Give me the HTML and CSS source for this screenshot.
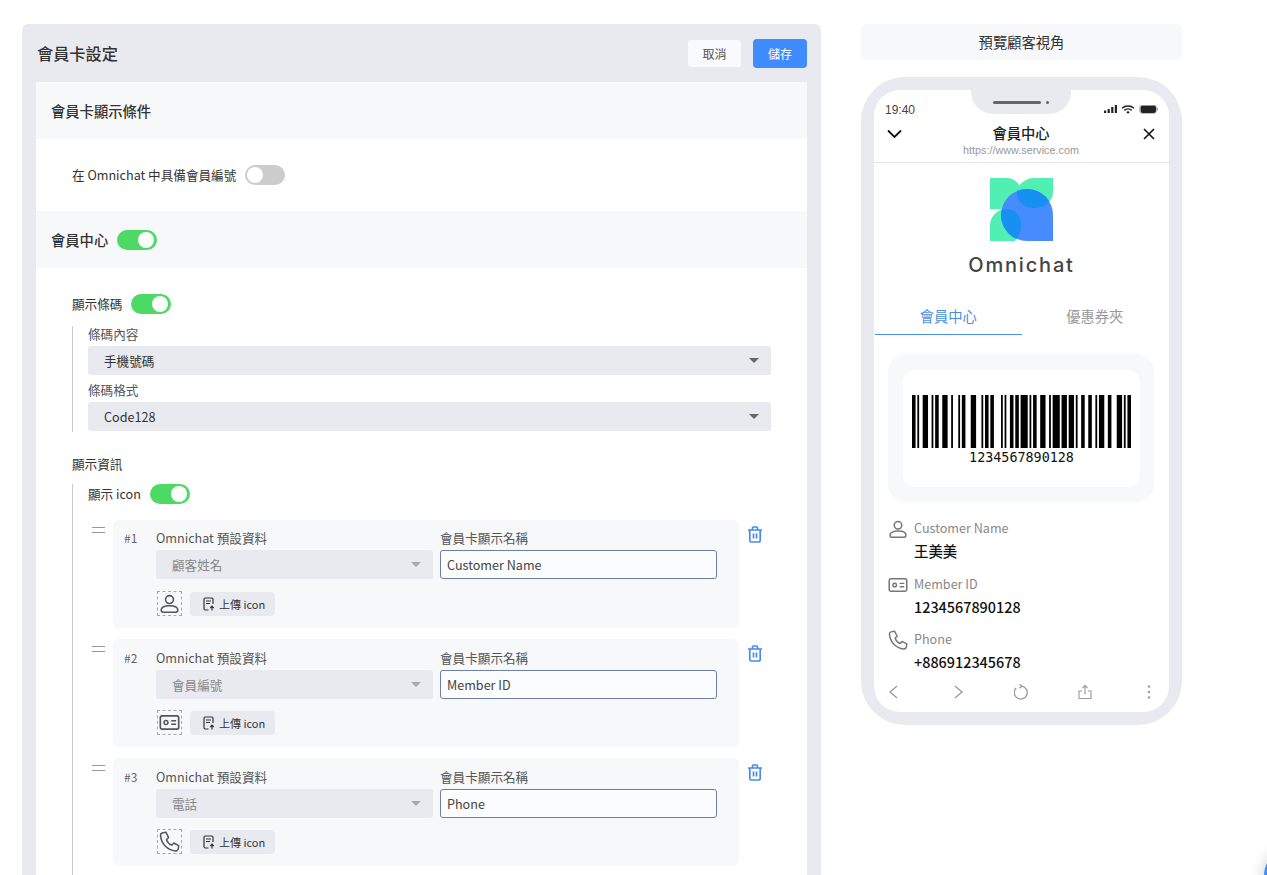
FILE: index.html
```html
<!DOCTYPE html>
<html lang="zh-Hant">
<head>
    <meta charset="UTF-8">
    <meta name="viewport" content="width=device-width, initial-scale=1.0">
    <title>會員卡設定</title>
    <link rel="stylesheet" href="styles.css">
</head>
<body>
    <svg class="icon-defs" width="0" height="0">
        <defs>
            <symbol id="i-person" viewBox="0 0 24 24"><circle cx="12" cy="7.5" r="4.5" fill="none" stroke="currentColor" stroke-width="1.8"/><path d="M5 22h14a2.5 2.5 0 0 0 2.5-2.5c0-3.5-4-5-9.500-5s-9.500 1.500-9.500 5A2.500 2.500 0 0 0 5 22z" fill="none" stroke="currentColor" stroke-width="1.8"/></symbol>
            <symbol id="i-card" viewBox="0 0 24 24"><rect x="1.5" y="4.5" width="21" height="15" rx="2" fill="none" stroke="currentColor" stroke-width="1.9"/><circle cx="8" cy="12" r="2.2" fill="none" stroke="currentColor" stroke-width="1.7"/><path d="M14 10h5.500M14 14h5.500" fill="none" stroke="currentColor" stroke-width="1.7"/></symbol>
            <symbol id="i-phone" viewBox="0 0 24 24"><path d="M4.500 2 8 1.500l3 6-2.500 2.500c1 2.800 3.400 5.200 6 6.200l2.400-2.500 5.600 3-.4 3.300c-.2 1.700-1.700 3-3.500 2.800C9.500 21.500 2.600 14.500 1.800 5.500 1.600 3.700 2.800 2.300 4.500 2z" fill="none" stroke="currentColor" stroke-width="1.7" stroke-linejoin="round"/></symbol>
            <symbol id="i-upload" viewBox="0 0 14 14"><path d="M6.500 13H3.200A1.200 1.200 0 0 1 2 11.800V2.200A1.200 1.200 0 0 1 3.200 1h6.600A1.200 1.200 0 0 1 11 2.200V7" fill="none" stroke="currentColor" stroke-width="1.2"/><path d="M4 4h5M4 6.500h4" fill="none" stroke="currentColor" stroke-width="1"/><path d="M10 13.500V9.500M8.300 11 10 9.200 11.700 11" fill="none" stroke="currentColor" stroke-width="1.2"/></symbol>
            <symbol id="i-trash" viewBox="0 0 16 17"><path d="M1 4h14M5.500 4V2a1 1 0 0 1 1-1h3a1 1 0 0 1 1 1v2" fill="none" stroke="currentColor" stroke-width="1.7"/><path d="M2.800 4v10.500A1.500 1.500 0 0 0 4.300 16h7.400a1.500 1.500 0 0 0 1.500-1.500V4" fill="none" stroke="currentColor" stroke-width="1.7"/><path d="M6.500 7.500v5M9.500 7.500v5" fill="none" stroke="currentColor" stroke-width="1.7"/></symbol>
        </defs>
    </svg>

    <div class="page">
        <div class="panel">
            <div class="panel-head">
                <h1 class="panel-title">會員卡設定</h1>
                <div class="panel-actions">
                    <button class="btn-cancel">取消</button>
                    <button class="btn-save">儲存</button>
                </div>
            </div>

            <div class="section-head">會員卡顯示條件</div>
            <div class="section-body condition-body">
                <div class="switch-row">
                    <span>在 Omnichat 中具備會員編號</span>
                    <span class="switch"></span>
                </div>
            </div>

            <div class="section-head">
                <span>會員中心</span>
                <span class="switch on"></span>
            </div>
            <div class="section-body">
                <div class="switch-row">
                    <span>顯示條碼</span>
                    <span class="switch on"></span>
                </div>
                <div class="branch">
                    <div class="field-label">條碼內容</div>
                    <div class="select">手機號碼<span class="caret"></span></div>
                    <div class="field-label next-field">條碼格式</div>
                    <div class="select">Code128<span class="caret"></span></div>
                </div>

                <div class="group-title">顯示資訊</div>
                <div class="branch info-branch">
                    <div class="switch-row">
                        <span>顯示 icon</span>
                        <span class="switch on"></span>
                    </div>

                    <div class="item-row">
                        <div class="drag"></div>
                        <div class="item-card">
                            <div class="item-num">#1</div>
                            <div class="item-main">
                                <div class="item-fields">
                                    <div class="item-col">
                                        <div class="field-label">Omnichat 預設資料</div>
                                        <div class="select disabled">顧客姓名<span class="caret"></span></div>
                                    </div>
                                    <div class="item-col">
                                        <div class="field-label">會員卡顯示名稱</div>
                                        <input class="name-input" type="text" value="Customer Name">
                                    </div>
                                </div>
                                <div class="icon-row">
                                    <span class="icon-box"><svg width="21" height="21"><use href="#i-person"/></svg></span>
                                    <span class="upload-btn"><svg width="14" height="14"><use href="#i-upload"/></svg>上傳 icon</span>
                                </div>
                            </div>
                        </div>
                        <svg class="trash" width="16" height="17"><use href="#i-trash"/></svg>
                    </div>

                    <div class="item-row">
                        <div class="drag"></div>
                        <div class="item-card">
                            <div class="item-num">#2</div>
                            <div class="item-main">
                                <div class="item-fields">
                                    <div class="item-col">
                                        <div class="field-label">Omnichat 預設資料</div>
                                        <div class="select disabled">會員編號<span class="caret"></span></div>
                                    </div>
                                    <div class="item-col">
                                        <div class="field-label">會員卡顯示名稱</div>
                                        <input class="name-input" type="text" value="Member ID">
                                    </div>
                                </div>
                                <div class="icon-row">
                                    <span class="icon-box"><svg width="21" height="21"><use href="#i-card"/></svg></span>
                                    <span class="upload-btn"><svg width="14" height="14"><use href="#i-upload"/></svg>上傳 icon</span>
                                </div>
                            </div>
                        </div>
                        <svg class="trash" width="16" height="17"><use href="#i-trash"/></svg>
                    </div>

                    <div class="item-row">
                        <div class="drag"></div>
                        <div class="item-card">
                            <div class="item-num">#3</div>
                            <div class="item-main">
                                <div class="item-fields">
                                    <div class="item-col">
                                        <div class="field-label">Omnichat 預設資料</div>
                                        <div class="select disabled">電話<span class="caret"></span></div>
                                    </div>
                                    <div class="item-col">
                                        <div class="field-label">會員卡顯示名稱</div>
                                        <input class="name-input" type="text" value="Phone">
                                    </div>
                                </div>
                                <div class="icon-row">
                                    <span class="icon-box"><svg width="21" height="21"><use href="#i-phone"/></svg></span>
                                    <span class="upload-btn"><svg width="14" height="14"><use href="#i-upload"/></svg>上傳 icon</span>
                                </div>
                            </div>
                        </div>
                        <svg class="trash" width="16" height="17"><use href="#i-trash"/></svg>
                    </div>
                </div>
            </div>
        </div>

        <div class="preview">
            <div class="preview-head">預覽顧客視角</div>
            <div class="phone">
                <div class="screen">
                    <div class="notch"><span class="speaker"></span><span class="camera"></span></div>
                    <div class="status-bar">
                        <span class="time">19:40</span>
                        <svg width="54" height="9" viewBox="0 0 54 9">
                            <rect x="0" y="5.5" width="2.2" height="2.5" fill="#222"/><rect x="3.6" y="4" width="2.2" height="4" fill="#222"/><rect x="7.2" y="2" width="2.2" height="6" fill="#222"/><rect x="10.8" y="0" width="2.2" height="8" fill="#222"/>
                            <path d="M18 3.2a9 9 0 0 1 12 0M20.300 5.400a5.500 5.500 0 0 1 7.400 0" fill="none" stroke="#222" stroke-width="1.5"/><path d="M22.200 7 24 8.800 25.800 7a2.600 2.600 0 0 0-3.600 0z" fill="#222"/>
                            <rect x="36.5" y=".5" width="15.5" height="7.5" rx="2" fill="#222"/><rect x="35.5" y="0" width="17" height="8.5" rx="2.5" fill="none" stroke="#999" stroke-width=".6"/><rect x="53" y="3" width="1" height="2.5" fill="#999"/>
                        </svg>
                    </div>
                    <div class="nav-bar">
                        <svg width="15" height="22" viewBox="0 0 15 9"><path d="M1 1l6.500 6.500L14 1" fill="none" stroke="#111" stroke-width="1.8"/></svg>
                        <div class="nav-title">
                            <div class="nav-name">會員中心</div>
                            <div class="nav-url">https://www.service.com</div>
                        </div>
                        <svg width="12" height="22" viewBox="0 0 12 12"><path d="M1 1l10 10M11 1 1 11" fill="none" stroke="#111" stroke-width="1.6"/></svg>
                    </div>

                    <div class="screen-content">
                        <svg class="logo" width="63" height="63" viewBox="0 0 63 63">
                            <defs><clipPath id="blob"><path d="M63 63H37a26 26 0 1 1 26-26z"/></clipPath></defs>
                            <path d="M63 0H44C35 0 27 7 27 15c0 9 8 15 17 15 10 0 19-6 19-16z" fill="#52efb4"/>
                            <path d="M0 0h17c8 0 15 7 15 16 0 9-7 15-15 15H0z" fill="#52efb4"/>
                            <path d="M0 63V47c0-9 8-16 16-16 9 0 15 7 15 15 0 7-3 13-6 17z" fill="#52efb4"/>
                            <path d="M63 63H37a26 26 0 1 1 26-26z" fill="#468cff"/>
                            <g clip-path="url(#blob)" fill="#1690f2">
                                <path d="M63 0H44C35 0 27 7 27 15c0 9 8 15 17 15 10 0 19-6 19-16z"/>
                                <path d="M0 63V47c0-9 8-16 16-16 9 0 15 7 15 15 0 7-3 13-6 17z"/>
                            </g>
                        </svg>
                        <div class="wordmark">Omnichat</div>
                        <div class="tabs">
                            <div class="tab active">會員中心</div>
                            <div class="tab">優惠券夾</div>
                        </div>
                        <div class="barcode-card">
                            <div class="barcode-inner">
                                <svg class="barcode" width="219" height="53" viewBox="0 0 123 1" preserveAspectRatio="none">
                                    <path d="M0 0h2v1h-2zM3 0h1v1h-1zM6 0h3v1h-3zM11 0h1v1h-1zM13 0h2v1h-2zM17 0h3v1h-3zM22 0h1v1h-1zM26 0h1v1h-1zM28 0h2v1h-2zM33 0h3v1h-3zM39 0h1v1h-1zM41 0h2v1h-2zM44 0h2v1h-2zM50 0h1v1h-1zM52 0h1v1h-1zM55 0h2v1h-2zM58 0h2v1h-2zM61 0h4v1h-4zM66 0h1v1h-1zM68 0h2v1h-2zM72 0h3v1h-3zM77 0h1v1h-1zM79 0h4v1h-4zM84 0h3v1h-3zM88 0h3v1h-3zM92 0h1v1h-1zM95 0h2v1h-2zM99 0h2v1h-2zM103 0h1v1h-1zM105 0h3v1h-3zM110 0h2v1h-2zM115 0h3v1h-3zM119 0h1v1h-1zM121 0h2v1h-2z" fill="#000"/>
                                </svg>
                                <div class="barcode-num">1234567890128</div>
                            </div>
                        </div>
                        <div class="info-row">
                            <svg width="20" height="20"><use href="#i-person"/></svg>
                            <div>
                                <div class="info-label">Customer Name</div>
                                <div class="info-value">王美美</div>
                            </div>
                        </div>
                        <div class="info-row">
                            <svg width="20" height="20"><use href="#i-card"/></svg>
                            <div>
                                <div class="info-label">Member ID</div>
                                <div class="info-value">1234567890128</div>
                            </div>
                        </div>
                        <div class="info-row">
                            <svg width="20" height="20"><use href="#i-phone"/></svg>
                            <div>
                                <div class="info-label">Phone</div>
                                <div class="info-value">+886912345678</div>
                            </div>
                        </div>
                    </div>

                    <div class="browser-bar">
                        <svg width="16" height="16" viewBox="0 0 16 16"><path d="M11 2 4 8l7 6" fill="none" stroke="#999" stroke-width="1.3"/></svg>
                        <svg width="16" height="16" viewBox="0 0 16 16"><path d="M5 2l7 6-7 6" fill="none" stroke="#999" stroke-width="1.3"/></svg>
                        <svg width="16" height="16" viewBox="1.5 0 16 16"><path d="M9 2.100A6.500 6.500 0 1 1 3.600 4" fill="none" stroke="#999" stroke-width="1.3"/><path d="M7 .2 9.500 2.200 7 4.200" fill="none" stroke="#999" stroke-width="1.2"/></svg>
                        <svg width="16" height="16" viewBox="0 0 16 16"><path d="M8 10.500V1.500M5.500 4 8 1.500 10.500 4M5 7H2v7.500h12V7h-3" fill="none" stroke="#999" stroke-width="1.1"/></svg>
                        <svg width="16" height="16" viewBox="0 0 16 16"><circle cx="8" cy="2.5" r="1.2" fill="#999"/><circle cx="8" cy="8" r="1.2" fill="#999"/><circle cx="8" cy="13.500" r="1.2" fill="#999"/></svg>
                    </div>
                </div>
            </div>
        </div>
    </div>

    <div class="launcher"></div>
</body>
</html>
```

FILE: styles.css
```css
* {
    box-sizing: border-box;
}
body {
    margin: 0;
    height: 875px;
    overflow: hidden;
    background-color: white;
    color: #333;
    font-family: "Noto Sans CJK TC", "Noto Sans", sans-serif;
    font-size: 12.6px;
    line-height: 16px;
}
.icon-defs {
    position: absolute;
}
.page {
    display: flex;
    align-items: flex-start;
    gap: 40px;
    padding: 24px 0 0 22px;
}

/* settings panel */
.panel {
    width: 799px;
    height: 851px;
    overflow: hidden;
    padding: 0 14px;
    background-color: #e8eaef;
    border-radius: 6px 6px 0 0;
}
.panel-head {
    display: flex;
    justify-content: space-between;
    align-items: center;
    height: 58px;
}
.panel-title {
    margin: 0 0 0 1px;
    font-size: 16.2px;
    font-weight: 500;
    line-height: 24px;
}
.panel-actions {
    display: flex;
    align-items: center;
    gap: 12px;
}
.panel-actions button {
    border: none;
    font-family: inherit;
    font-size: 12px;
}
.btn-cancel {
    width: 53px;
    height: 27px;
    background-color: #f9fafc;
    color: #555;
    border-radius: 3px;
}
.btn-save {
    width: 54px;
    height: 29px;
    background-color: #3f8cff;
    color: white;
    border-radius: 4px;
}
.section-head {
    display: flex;
    align-items: center;
    gap: 9px;
    height: 57px;
    padding-left: 15px;
    background-color: #f7f8fa;
    font-size: 14.3px;
    font-weight: 500;
}
.section-body {
    padding: 26px 36px 0;
    background-color: white;
}
.condition-body {
    display: flex;
    align-items: center;
    height: 72px;
    padding-top: 0;
    padding-bottom: 1px;
}
.switch-row {
    display: flex;
    align-items: center;
    gap: 9px;
    height: 20px;
}
.switch {
    position: relative;
    display: inline-block;
    width: 40px;
    height: 20px;
    background-color: #ccc;
    border-radius: 10px;
}
.switch::after {
    content: "";
    position: absolute;
    left: 2px;
    top: 2px;
    width: 16px;
    height: 16px;
    background-color: white;
    border-radius: 50%;
}
.switch.on {
    background-color: #4cd964;
}
.switch.on::after {
    left: 21px;
}
.branch {
    margin-top: 12px;
    padding-left: 15px;
    border-left: 1px solid #ccc;
    padding-bottom: 1px;
}
.info-branch {
    height: 400px;
}
.field-label {
    color: #555;
}
.next-field {
    margin-top: 7px;
}
.select {
    position: relative;
    display: flex;
    align-items: center;
    height: 29px;
    margin-top: 4px;
    padding-left: 16px;
    background-color: #e8eaef;
    border-radius: 3px;
    color: #333;
}
.select.disabled {
    color: #888;
}
.caret {
    position: absolute;
    right: 12px;
    top: 12px;
    border-left: 5px solid transparent;
    border-right: 5px solid transparent;
    border-top: 5px solid #666;
}
.disabled .caret {
    border-top-color: #aaa;
}
.group-title {
    margin-top: 24px;
    color: #333;
}

/* info items */
.item-row {
    display: flex;
    align-items: flex-start;
    margin-top: 11px;
}
.switch-row + .item-row {
    margin-top: 16px;
}
.drag {
    width: 13px;
    height: 6px;
    margin: 7px 8px 0 4px;
    border-top: 1px solid #999;
    border-bottom: 1px solid #999;
}
.item-card {
    display: flex;
    width: 626px;
    height: 108px;
    padding: 10px 0 0 11px;
    background-color: #f7f8fa;
    border-radius: 6px;
}
.item-num {
    width: 32px;
    color: #666;
    font-size: 12px;
}
.item-fields {
    display: flex;
    gap: 7px;
}
.item-row + .item-row .item-fields,
.item-row + .item-row .item-num {
    margin-top: 1px;
}
.item-col {
    width: 277px;
}
.name-input {
    display: block;
    width: 100%;
    height: 29px;
    margin-top: 4px;
    padding: 0 6px;
    background-color: #fbfcfd;
    border: 1px solid #6c7fa6;
    border-radius: 3px;
    color: #444;
    font-family: inherit;
    font-size: 12.6px;
}
.icon-row {
    display: flex;
    align-items: center;
    gap: 8px;
    margin: 12px 0 0 1px;
    color: #555;
}
.item-row + .item-row .icon-row {
    margin-top: 11px;
}
.icon-box {
    display: flex;
    justify-content: center;
    align-items: center;
    width: 25px;
    height: 25px;
    border: 1px dashed #aaa;
}
.upload-btn {
    display: flex;
    align-items: center;
    gap: 3px;
    height: 24px;
    width: 85px;
    padding-left: 12px;
    background-color: #e8eaef;
    border-radius: 4px;
    color: #333;
    font-size: 11px;
}
.trash {
    margin: 6px 0 0 8px;
    color: #4a8ae8;
}

/* phone preview */
.preview {
    width: 321px;
}
.preview-head {
    height: 36px;
    margin-bottom: 17px;
    background-color: #f7f8fa;
    border-radius: 6px;
    font-size: 14.3px;
    line-height: 36px;
    text-align: center;
}
.phone {
    height: 648px;
    padding: 13px;
    background-color: #e8eaf0;
    border-radius: 44px;
}
.screen {
    position: relative;
    display: flex;
    flex-direction: column;
    height: 622px;
    overflow: hidden;
    background-color: white;
    border-radius: 26px;
}
.notch {
    position: absolute;
    left: 97px;
    top: 0;
    display: flex;
    justify-content: center;
    align-items: center;
    gap: 5px;
    width: 100px;
    height: 24px;
    padding-top: 1px;
    background-color: #e8eaf0;
    border-radius: 0 0 22px 22px;
}
.speaker {
    width: 48px;
    height: 3px;
    background-color: #666;
    border-radius: 2px;
}
.camera {
    width: 3px;
    height: 3px;
    background-color: #666;
    border-radius: 50%;
}
.status-bar {
    display: flex;
    justify-content: space-between;
    align-items: center;
    flex-shrink: 0;
    height: 29px;
    padding: 10px 11px 0 11px;
}
.time {
    color: #444;
    font-family: "Liberation Sans", sans-serif;
    font-size: 12px;
}
.nav-bar {
    display: flex;
    justify-content: space-between;
    align-items: flex-start;
    flex-shrink: 0;
    height: 44px;
    padding: 4px 14px 0 13px;
    border-bottom: 1px solid #e5e5e5;
}
.nav-title {
    margin-right: 3px;
    text-align: center;
}
.nav-name {
    color: #222;
    font-size: 14.3px;
    font-weight: 500;
    line-height: 20px;
}
.nav-url {
    margin-top: 1px;
    color: #999;
    font-family: "Liberation Sans", sans-serif;
    font-size: 10.8px;
    line-height: 13px;
}
.screen-content {
    flex: 1;
    overflow: hidden;
}
.logo {
    display: block;
    margin: 15px auto 0;
}
.wordmark {
    margin-top: 12px;
    color: #444;
    font-family: Inter, sans-serif;
    font-size: 20px;
    font-weight: 450;
    line-height: 24px;
    letter-spacing: 1.8px;
    text-align: center;
}
.tabs {
    display: flex;
    margin: 25px 1px 0;
}
.tab {
    flex: 1;
    height: 33px;
    padding-top: 4px;
    color: #999;
    font-size: 14.3px;
    line-height: 20px;
    text-align: center;
}
.tab.active {
    color: #4a90e2;
    border-bottom: 1px solid #4a90e2;
}
.barcode-card {
    width: 266px;
    height: 148px;
    margin: 19px 0 0 14px;
    padding: 16px 14px 15px 15px;
    background-color: #f7f8fa;
    border-radius: 18px;
}
.barcode-inner {
    height: 117px;
    padding-top: 25px;
    background-color: white;
    border-radius: 12px;
    text-align: center;
}
.barcode {
    display: block;
    margin: 0 auto;
}
.barcode-num {
    color: #111;
    font-family: "DejaVu Sans Mono", monospace;
    font-size: 13.4px;
    line-height: 20px;
}
.info-row {
    display: flex;
    gap: 6px;
    margin: 0 0 11.5px 14px;
    color: #777;
}
.barcode-card + .info-row {
    margin-top: 17px;
}
.info-label {
    color: #888;
    line-height: 18px;
}
.info-value {
    margin-top: 1px;
    color: #111;
    font-size: 14.4px;
    font-weight: 500;
    line-height: 25px;
}
.browser-bar {
    display: flex;
    justify-content: space-between;
    align-items: center;
    flex-shrink: 0;
    height: 40px;
    padding: 0 12px;
}

.launcher {
    position: fixed;
    left: 1264px;
    top: 850px;
    width: 50px;
    height: 50px;
    background-color: #3f8cff;
    border-radius: 50%;
    box-shadow: 0 0 16px rgba(0,0,0,0.2);
}
```
